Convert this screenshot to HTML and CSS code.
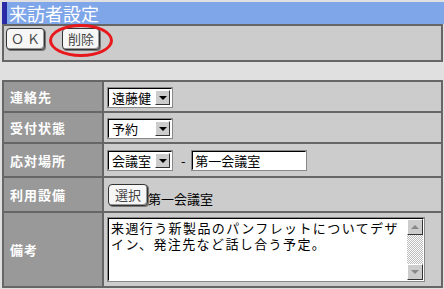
FILE: index.html
```html
<!DOCTYPE html>
<html lang="ja">
<head>
    <meta charset="UTF-8">
    <title>来訪者設定</title>
    <link rel="stylesheet" href="styles.css">
</head>
<body>
    <h1 class="title">来訪者設定</h1>
    <div class="toolbar">
        <button class="btn btn-ok" type="button">ＯＫ</button>
        <span class="mark">
            <button class="btn btn-del" type="button">削除</button>
            <span class="ring"></span>
        </span>
    </div>
    <table class="form">
        <tr class="r1">
            <th>連絡先</th>
            <td><span class="sel">遠藤健<span class="drop"></span></span></td>
        </tr>
        <tr class="r2">
            <th>受付状態</th>
            <td><span class="sel">予約<span class="drop"></span></span></td>
        </tr>
        <tr class="r3">
            <th>応対場所</th>
            <td>
                <span class="sel">会議室<span class="drop"></span></span>
                <span class="dash">-</span>
                <span class="field">第一会議室</span>
            </td>
        </tr>
        <tr class="r4">
            <th>利用設備</th>
            <td><button class="btn btn-pick" type="button">選択</button><span class="picked">第一会議室</span></td>
        </tr>
        <tr class="r5">
            <th>備考</th>
            <td>
                <div class="memo">
                    <div class="memo-text">来週行う新製品のパンフレットについてデザイン、発注先など話し合う予定。</div>
                    <div class="scroll">
                        <span class="arrow up"></span>
                        <span class="track"></span>
                        <span class="arrow down"></span>
                    </div>
                </div>
            </td>
        </tr>
    </table>
</body>
</html>
```

FILE: styles.css
```css
body {
    margin: 2px 0 0 2px;
    background-color: #e0e0e0;
    font-family: "Noto Sans CJK JP", "DejaVu Sans", sans-serif;
    font-size: 13px;
    color: #000;
}
.title {
    margin: 0;
    height: 22px;
    line-height: 22px;
    padding-left: 2px;
    border-left: 5px solid #2b2ba6;
    background-color: #7ea6e8;
    color: #fff;
    font-size: 18px;
    font-weight: normal;
}
.toolbar {
    display: flex;
    align-items: flex-start;
    gap: 17px;
    height: 30px;
    margin-right: 1px;
    padding: 2px;
    border: 2px solid #666;
    background-color: #ccc;
}
.btn {
    height: 22px;
    padding: 0;
    border: 1px solid #333;
    border-radius: 4px;
    background-color: #f6f6f6;
    box-shadow: inset -1px -1px 0 #999, 1px 1px 0 #777;
    color: #444;
    font-family: "Noto Sans CJK JP", sans-serif;
    font-size: 13px;
    line-height: 18px;
    white-space: nowrap;
}
.btn-ok {
    width: 39px;
    letter-spacing: 3px;
    padding-left: 3px;
}
.btn-del {
    width: 38px;
}
.mark {
    position: relative;
    display: inline-block;
}
.ring {
    position: absolute;
    left: -13px;
    top: -4px;
    width: 58px;
    height: 27px;
    border: 3px solid #e8181c;
    border-radius: 50%;
    filter: blur(0.4px);
}
.form {
    width: 441px;
    margin-top: 18px;
    border-collapse: collapse;
}
.form th,
.form td {
    border: 2px solid #666;
    padding: 0 0 0 4px;
}
.form th {
    width: 92px;
    padding-left: 6px;
    background-color: #999;
    color: #fff;
    font-weight: bold;
    text-align: left;
    letter-spacing: 1px;
}
.form td {
    background-color: #ccc;
}
.r1 { height: 31px; }
.r2 { height: 31px; }
.r3 { height: 34px; }
.r4 { height: 35px; }
.r5 { height: 75px; }
.sel {
    position: relative;
    display: inline-block;
    box-sizing: border-box;
    width: 64px;
    height: 19px;
    padding-left: 3px;
    border: 1px solid;
    border-color: #000 #fff #fff #000;
    outline: 1px solid #888;
    background-color: #fff;
    font-size: 13px;
    line-height: 17px;
    vertical-align: middle;
}
.drop {
    position: absolute;
    right: 1px;
    top: 1px;
    width: 15px;
    height: 15px;
    box-sizing: border-box;
    border: 1px solid;
    border-color: #fff #333 #333 #fff;
    background-color: #ccc;
}
.drop::after {
    content: "";
    position: absolute;
    left: 3px;
    top: 5px;
    border-left: 4px solid transparent;
    border-right: 4px solid transparent;
    border-top: 4px solid #000;
}
.dash {
    margin: 0 4px 0 6px;
    vertical-align: middle;
}
.field {
    display: inline-block;
    box-sizing: border-box;
    width: 114px;
    height: 19px;
    padding-left: 2px;
    border: 1px solid;
    border-color: #000 #fff #fff #000;
    outline: 1px solid #888;
    background-color: #fff;
    line-height: 17px;
    vertical-align: middle;
}
.btn-pick {
    width: 40px;
    vertical-align: bottom;
}
.picked {
    vertical-align: bottom;
    line-height: 15px;
}
.memo {
    display: flex;
    box-sizing: border-box;
    width: 316px;
    height: 63px;
    border: 1px solid;
    border-color: #000 #fff #fff #000;
    outline: 1px solid #888;
    background-color: #fff;
}
.memo-text {
    flex: 1;
    padding: 1px 2px;
    font-size: 13px;
    line-height: 16px;
    letter-spacing: 1.4px;
}
.scroll {
    display: flex;
    flex-direction: column;
    width: 16px;
}
.arrow {
    position: relative;
    height: 16px;
    box-sizing: border-box;
    border: 1px solid;
    border-color: #fff #333 #333 #fff;
    background-color: #ccc;
}
.arrow::after {
    content: "";
    position: absolute;
    left: 3px;
    top: 5px;
    border-left: 4px solid transparent;
    border-right: 4px solid transparent;
}
.arrow.up::after {
    border-bottom: 4px solid #888;
}
.arrow.down::after {
    border-top: 4px solid #888;
}
.track {
    flex: 1;
    background: repeating-conic-gradient(#bbb 0 25%, #fff 0 50%) 0 0 / 2px 2px;
}
```
